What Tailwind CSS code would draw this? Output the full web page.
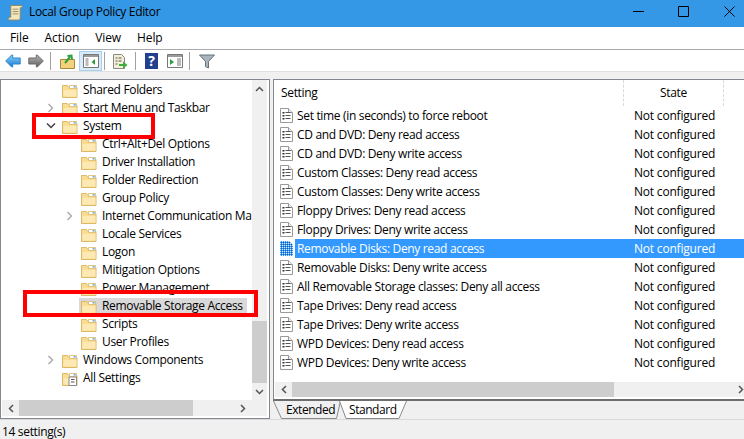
<!DOCTYPE html>
<html lang="en">
<head>
    <meta charset="UTF-8">
    <title>Local Group Policy Editor</title>
    <script src="https://cdn.jsdelivr.net/npm/@tailwindcss/browser@4"></script>
</head>
<body class="w-[744px] h-[439px] overflow-hidden bg-[#f0f0f0] text-black font-['Open_Sans',sans-serif] text-[12px] leading-[18px] tracking-[-0.33px]">

<svg class="hidden">
    <symbol id="folder" viewBox="0 0 16 16">
        <path d="M.5 15.500V3.500h5l1.500 2h8v10z" fill="#f9dd93" stroke="#dcb967"/>
        <path d="M1.500 8h13v6.500h-13z" fill="#fce9b4"/>
        <path d="M7.500 3.500h7v3h-7z" fill="#fff" stroke="#dcb967" stroke-width="0.800"/>
        <path d="M11.500 4.200h2.300v1.300h-2.300z" fill="#5aa0e0"/>
    </symbol>
    <symbol id="doc" viewBox="0 0 13 15">
        <path d="M.5 .5h8l4 4v10H.5z" fill="#fff" stroke="#9a9a9a"/>
        <path d="M8.500 .5v4h4" fill="#eee" stroke="#9a9a9a"/>
        <path d="M2.500 4h2v1.500h-2zM2.500 7h2v1.500h-2zM2.500 10h2v1.500h-2z" fill="#333"/>
        <path d="M5.500 4.500h5M5.500 7.500h5M5.500 10.500h5" stroke="#555"/>
    </symbol>
    <symbol id="chev-right" viewBox="0 0 8 10">
        <path d="M1.500 1l4 4-4 4" fill="none" stroke="#a6a6a6" stroke-width="1.300"/>
    </symbol>
    <symbol id="chev-down" viewBox="0 0 10 8">
        <path d="M1 1.500l4 4 4-4" fill="none" stroke="#404040" stroke-width="1.500"/>
    </symbol>
</svg>

<!-- Title bar -->
<div class="h-[27px] pb-[3px] bg-[#3498e6] flex items-center">
    <svg class="ml-[7px] w-[17px] h-[17px]" viewBox="0 0 18 18">
        <path d="M4 1.500h11c1.500 0 1.500 2.500 0 2.500h-1v10c0 2-1 3-2 3H3c-2 0-2-3 0-3h1z" fill="#f3e7bd" stroke="#8f8460"/>
        <path d="M6 5.500h6M6 8h6M6 10.500h6" stroke="#9a8c60"/>
    </svg>
    <span class="ml-[5px]">Local Group Policy Editor</span>
    <div class="ml-auto flex items-center mb-[1px]">
        <svg class="w-[11px] h-[11px] mr-[34px]" viewBox="0 0 11 11"><path d="M0 5.500h11" stroke="#000"/></svg>
        <svg class="w-[11px] h-[11px] mr-[35px]" viewBox="0 0 11 11"><path d="M.5 .5h10v10H.5z" fill="none" stroke="#000"/></svg>
        <svg class="w-[11px] h-[11px] mr-[9px]" viewBox="0 0 11 11"><path d="M.5 .5l10 10M10.500 .5l-10 10" stroke="#000"/></svg>
    </div>
</div>

<!-- Menu bar -->
<div class="h-[23px] bg-white border-b border-[#a9a9b0] flex items-center pl-[10px] gap-[16px] tracking-[-0.1px]">
    <span>File</span><span>Action</span><span>View</span><span>Help</span>
</div>

<!-- Toolbar -->
<div class="h-[22px] pt-[1px] bg-white border-b border-[#e0e0e0] flex items-center pl-[5px]">
    <svg class="w-[16px] h-[14px]" viewBox="0 0 16 14">
        <defs><linearGradient id="backFill" x1="0" y1="0" x2="0" y2="1"><stop offset="0" stop-color="#8fd3f8"/><stop offset="1" stop-color="#1679d2"/></linearGradient></defs>
        <path d="M.7 7l6-6h1v3h7.500v6H7.700v3h-1z" fill="url(#backFill)" stroke="#2a86cf"/>
    </svg>
    <svg class="w-[16px] h-[14px] ml-[7px]" viewBox="0 0 16 14">
        <defs><linearGradient id="fwdFill" x1="0" y1="0" x2="0" y2="1"><stop offset="0" stop-color="#b5b5b5"/><stop offset="1" stop-color="#5f5f5f"/></linearGradient></defs>
        <path d="M15.300 7l-6-6h-1v3H.8v6h7.500v3h1z" fill="url(#fwdFill)" stroke="#6b6b6b"/>
    </svg>
    <div class="w-px h-[18px] bg-[#a0a0a0] ml-[6px]"></div>
    <svg class="w-[15px] h-[15px] ml-[9px]" viewBox="0 0 15 15"><path d="M.5 5.500h14v9H.5z" fill="#f3d27c" stroke="#a88a3c"/><path d="M5 9l5-6M7.500 2l4-.500.5 4" fill="none" stroke="#2e9e3f" stroke-width="2"/></svg>
    <div class="w-[23px] h-[20px] ml-[4px] bg-[#d9ebfa] border border-[#a8d0ef] flex items-center justify-center">
        <svg class="w-[16px] h-[14px]" viewBox="0 0 16 14"><path d="M.5 .5h15v13H.5z" fill="#fff" stroke="#777"/><path d="M1 1h14v2H1z" fill="#9a9a9a"/><path d="M2.500 5h3M2.500 7h3M2.500 9h3M2.500 11h3" stroke="#777"/><path d="M12 5v6L8.500 8z" fill="#2e9e3f"/></svg>
    </div>
    <div class="w-px h-[18px] bg-[#a0a0a0] ml-[2px]"></div>
    <svg class="w-[15px] h-[15px] ml-[8px]" viewBox="0 0 15 15"><path d="M.5 .5h8l3 3v11H.5z" fill="#f5efd8" stroke="#888"/><path d="M2.500 4h2M5.500 4h3M2.500 7h2M5.500 7h3M2.500 10h2" stroke="#555"/><path d="M6 10h4V7.500l4.500 3.500-4.500 3.500V12H6z" fill="#3fae3f"/></svg>
    <div class="w-px h-[18px] bg-[#a0a0a0] ml-[7px]"></div>
    <div class="ml-[9px] w-[13px] h-[16px] bg-[#23408f] text-white font-bold text-[14px] leading-[16px] text-center tracking-normal">?</div>
    <svg class="w-[16px] h-[14px] ml-[9px]" viewBox="0 0 16 14"><path d="M.5 .5h15v13H.5z" fill="#fff" stroke="#777"/><path d="M1 1h14v2H1z" fill="#9a9a9a"/><path d="M3 5v6l4-3z" fill="#2e9e3f"/><path d="M10 5h4M10 7h4M10 9h4M10 11h4" stroke="#777"/></svg>
    <div class="w-px h-[18px] bg-[#a0a0a0] ml-[6px]"></div>
    <svg class="w-[16px] h-[15px] ml-[9px]" viewBox="0 0 16 15"><path d="M.5 1h15L9.500 7.500V14l-3-1.500v-5z" fill="#a9b4bc" stroke="#66727a"/></svg>
</div>

<!-- Panes -->
<div class="pt-[7px] flex h-[347px] gap-[3px]">
    <!-- Tree pane -->
    <div class="w-[270px] h-[340px] border border-[#828790] bg-white flex flex-col">
        <div class="flex h-[320px]">
            <div class="flex-1 min-w-0 pt-[1px] overflow-hidden">
                <div class="flex items-center h-[18px] pl-[61px] gap-[5px]"><svg class="w-[16px] h-[16px]"><use href="#folder"/></svg>Shared Folders</div>
                <div class="flex items-center h-[18px] pl-[46px] gap-[5px]"><svg class="w-[8px] h-[10px] mr-[2px]"><use href="#chev-right"/></svg><svg class="w-[16px] h-[16px]"><use href="#folder"/></svg>Start Menu and Taskbar</div>
                <div class="flex items-center h-[18px] pl-[45px] gap-[5px]"><svg class="w-[10px] h-[8px] mr-[1px]"><use href="#chev-down"/></svg><svg class="w-[16px] h-[16px]"><use href="#folder"/></svg>System</div>
                <div class="flex items-center h-[18px] pl-[80px] gap-[5px]"><svg class="w-[16px] h-[16px]"><use href="#folder"/></svg>Ctrl+Alt+Del Options</div>
                <div class="flex items-center h-[18px] pl-[80px] gap-[5px]"><svg class="w-[16px] h-[16px]"><use href="#folder"/></svg>Driver Installation</div>
                <div class="flex items-center h-[18px] pl-[80px] gap-[5px]"><svg class="w-[16px] h-[16px]"><use href="#folder"/></svg>Folder Redirection</div>
                <div class="flex items-center h-[18px] pl-[80px] gap-[5px]"><svg class="w-[16px] h-[16px]"><use href="#folder"/></svg>Group Policy</div>
                <div class="flex items-center h-[18px] pl-[65px] gap-[5px] whitespace-nowrap"><svg class="w-[8px] h-[10px] mr-[2px] shrink-0"><use href="#chev-right"/></svg><svg class="w-[16px] h-[16px] shrink-0"><use href="#folder"/></svg>Internet Communication Management</div>
                <div class="flex items-center h-[18px] pl-[80px] gap-[5px]"><svg class="w-[16px] h-[16px]"><use href="#folder"/></svg>Locale Services</div>
                <div class="flex items-center h-[18px] pl-[80px] gap-[5px]"><svg class="w-[16px] h-[16px]"><use href="#folder"/></svg>Logon</div>
                <div class="flex items-center h-[18px] pl-[80px] gap-[5px]"><svg class="w-[16px] h-[16px]"><use href="#folder"/></svg>Mitigation Options</div>
                <div class="flex items-center h-[18px] pl-[80px] gap-[5px]"><svg class="w-[16px] h-[16px]"><use href="#folder"/></svg>Power Management</div>
                <div class="flex items-center h-[18px] pl-[78px]"><div class="flex items-center h-[17px] gap-[5px] pl-[2px] pr-[4px] bg-[#d9d9d9]"><svg class="w-[16px] h-[16px]"><use href="#folder"/></svg>Removable Storage Access</div></div>
                <div class="flex items-center h-[18px] pl-[80px] gap-[5px]"><svg class="w-[16px] h-[16px]"><use href="#folder"/></svg>Scripts</div>
                <div class="flex items-center h-[18px] pl-[80px] gap-[5px]"><svg class="w-[16px] h-[16px]"><use href="#folder"/></svg>User Profiles</div>
                <div class="flex items-center h-[18px] pl-[46px] gap-[5px]"><svg class="w-[8px] h-[10px] mr-[2px]"><use href="#chev-right"/></svg><svg class="w-[16px] h-[16px]"><use href="#folder"/></svg>Windows Components</div>
                <div class="flex items-center h-[18px] pl-[61px] gap-[5px]"><svg class="w-[16px] h-[16px]" viewBox="0 0 16 16"><use href="#folder"/><path d="M7 7h7.500v8.500H7z" fill="#fff" stroke="#888"/><path d="M9 9.500h3.500M9 12h3.500" stroke="#555"/></svg>All Settings</div>
            </div>
            <!-- Tree vertical scrollbar -->
            <div class="w-[15px] mr-[2px] bg-[#f0f0f0] flex flex-col shrink-0">
                <div class="h-[17px] flex items-center justify-center"><svg class="w-[9px] h-[6px]" viewBox="0 0 9 6"><path d="M1 5l3.500-3.500L8 5" fill="none" stroke="#555" stroke-width="1.500"/></svg></div>
                <div class="flex-1 flex flex-col justify-end"><div class="h-[62px] bg-[#cdcdcd]"></div></div>
                <div class="h-[17px] flex items-center justify-center"><svg class="w-[9px] h-[6px]" viewBox="0 0 9 6"><path d="M1 1l3.500 3.500L8 1" fill="none" stroke="#555" stroke-width="1.500"/></svg></div>
            </div>
        </div>
        <!-- Tree horizontal scrollbar -->
        <div class="h-[16px] ml-[1px] mr-[2px] bg-[#f0f0f0] flex items-center">
            <div class="w-[17px] flex justify-center"><svg class="w-[6px] h-[9px]" viewBox="0 0 6 9"><path d="M5 1L1.500 4.500 5 8" fill="none" stroke="#555" stroke-width="1.500"/></svg></div>
            <div class="w-[174px] h-[16px] bg-[#cdcdcd]"></div>
            <div class="flex-1 flex justify-end pr-[21px]"><svg class="w-[6px] h-[9px]" viewBox="0 0 6 9"><path d="M1 1l3.500 3.500L1 8" fill="none" stroke="#555" stroke-width="1.500"/></svg></div>
        </div>
    </div>

    <!-- Settings pane -->
    <div class="flex-1 h-[340px] flex flex-col min-w-0">
        <div class="h-[322px] border-t border-l border-b-2 border-[#828790] border-b-[#6d6d6d] bg-white flex flex-col pb-[2px]">
            <div class="h-[26px] flex shrink-0">
                <div class="w-[350px] pl-[7px] pt-[4px] border-r border-dashed border-[#d9d9d9]">Setting</div>
                <div class="w-[100px] text-center pt-[4px] border-r border-dashed border-[#d9d9d9]">State</div>
            </div>
            <div class="flex-1 min-h-0">
                <div class="flex h-[19px] items-center"><svg class="ml-[6px] w-[13px] h-[15px]"><use href="#doc"/></svg><span class="w-[332px] pl-[4px]">Set time (in seconds) to force reboot</span><span class="pl-[9px] tracking-[-0.2px]">Not configured</span></div>
                <div class="flex h-[19px] items-center"><svg class="ml-[6px] w-[13px] h-[15px]"><use href="#doc"/></svg><span class="w-[332px] pl-[4px]">CD and DVD: Deny read access</span><span class="pl-[9px] tracking-[-0.2px]">Not configured</span></div>
                <div class="flex h-[19px] items-center"><svg class="ml-[6px] w-[13px] h-[15px]"><use href="#doc"/></svg><span class="w-[332px] pl-[4px]">CD and DVD: Deny write access</span><span class="pl-[9px] tracking-[-0.2px]">Not configured</span></div>
                <div class="flex h-[19px] items-center"><svg class="ml-[6px] w-[13px] h-[15px]"><use href="#doc"/></svg><span class="w-[332px] pl-[4px]">Custom Classes: Deny read access</span><span class="pl-[9px] tracking-[-0.2px]">Not configured</span></div>
                <div class="flex h-[19px] items-center"><svg class="ml-[6px] w-[13px] h-[15px]"><use href="#doc"/></svg><span class="w-[332px] pl-[4px]">Custom Classes: Deny write access</span><span class="pl-[9px] tracking-[-0.2px]">Not configured</span></div>
                <div class="flex h-[19px] items-center"><svg class="ml-[6px] w-[13px] h-[15px]"><use href="#doc"/></svg><span class="w-[332px] pl-[4px]">Floppy Drives: Deny read access</span><span class="pl-[9px] tracking-[-0.2px]">Not configured</span></div>
                <div class="flex h-[19px] items-center"><svg class="ml-[6px] w-[13px] h-[15px]"><use href="#doc"/></svg><span class="w-[332px] pl-[4px]">Floppy Drives: Deny write access</span><span class="pl-[9px] tracking-[-0.2px]">Not configured</span></div>
                <!-- Selected row, icon is dithered with the highlight colour -->
                <div class="flex h-[19px] items-center">
                    <svg class="ml-[6px] w-[13px] h-[15px]" viewBox="0 0 13 15">
                        <defs><pattern id="dither" width="2" height="2" patternUnits="userSpaceOnUse"><rect width="2" height="2" fill="#3399ff"/><rect width="1" height="1" fill="#cfe6ff"/><rect x="1" y="1" width="1" height="1" fill="#1c5fa8"/></pattern></defs>
                        <path d="M0 0h9l4 4v11H0z" fill="url(#dither)"/>
                    </svg>
                    <div class="flex-1 flex items-center h-[19px] bg-[#3399ff] text-white ml-[2px]"><span class="w-[330px] pl-[2px]">Removable Disks: Deny read access</span><span class="pl-[9px] tracking-[-0.2px]">Not configured</span></div>
                </div>
                <div class="flex h-[19px] items-center"><svg class="ml-[6px] w-[13px] h-[15px]"><use href="#doc"/></svg><span class="w-[332px] pl-[4px]">Removable Disks: Deny write access</span><span class="pl-[9px] tracking-[-0.2px]">Not configured</span></div>
                <div class="flex h-[19px] items-center"><svg class="ml-[6px] w-[13px] h-[15px]"><use href="#doc"/></svg><span class="w-[332px] pl-[4px]">All Removable Storage classes: Deny all access</span><span class="pl-[9px] tracking-[-0.2px]">Not configured</span></div>
                <div class="flex h-[19px] items-center"><svg class="ml-[6px] w-[13px] h-[15px]"><use href="#doc"/></svg><span class="w-[332px] pl-[4px]">Tape Drives: Deny read access</span><span class="pl-[9px] tracking-[-0.2px]">Not configured</span></div>
                <div class="flex h-[19px] items-center"><svg class="ml-[6px] w-[13px] h-[15px]"><use href="#doc"/></svg><span class="w-[332px] pl-[4px]">Tape Drives: Deny write access</span><span class="pl-[9px] tracking-[-0.2px]">Not configured</span></div>
                <div class="flex h-[19px] items-center"><svg class="ml-[6px] w-[13px] h-[15px]"><use href="#doc"/></svg><span class="w-[332px] pl-[4px]">WPD Devices: Deny read access</span><span class="pl-[9px] tracking-[-0.2px]">Not configured</span></div>
                <div class="flex h-[19px] items-center"><svg class="ml-[6px] w-[13px] h-[15px]"><use href="#doc"/></svg><span class="w-[332px] pl-[4px]">WPD Devices: Deny write access</span><span class="pl-[9px] tracking-[-0.2px]">Not configured</span></div>
            </div>
            <!-- List horizontal scrollbar -->
            <div class="h-[15px] ml-px bg-[#f0f0f0] flex items-center shrink-0">
                <div class="w-[17px] flex justify-center"><svg class="w-[6px] h-[9px]" viewBox="0 0 6 9"><path d="M5 1L1.500 4.500 5 8" fill="none" stroke="#555" stroke-width="1.500"/></svg></div>
                <div class="w-[322px] h-[15px] bg-[#cdcdcd]"></div>
                <div class="flex-1 flex justify-end"><svg class="w-[6px] h-[9px]" viewBox="0 0 6 9"><path d="M1 1l3.500 3.500L1 8" fill="none" stroke="#555" stroke-width="1.500"/></svg></div>
            </div>
        </div>
        <!-- Tabs -->
        <div class="h-[18px] flex shrink-0 relative tracking-[-0.45px]">
            <svg class="absolute left-0 top-0 w-[140px] h-[18px]" viewBox="0 0 140 18">
                <path d="M.5 0l8 17.500h55L67.500 0" fill="#f0f0f0" stroke="#8a8a8a"/>
                <path d="M66.500 0l6.500 17.500h53L133.500 0" fill="#fff" stroke="#8a8a8a"/>
            </svg>
            <span class="relative ml-[13px] w-[63px]">Extended</span>
            <span class="relative">Standard</span>
        </div>
    </div>
</div>

<!-- Status bar -->
<div class="h-[20px] pt-[5px] pl-[2px] border-t border-[#d9d9d9] leading-[14px]">14 setting(s)</div>

<!-- Red annotation boxes -->
<div class="absolute left-[32px] top-[113px] w-[123px] h-[26px] border-[4px] border-[#ff0000]"></div>
<div class="absolute left-[23px] top-[290px] w-[235px] h-[27px] border-[4px] border-[#ff0000]"></div>

</body>
</html>
